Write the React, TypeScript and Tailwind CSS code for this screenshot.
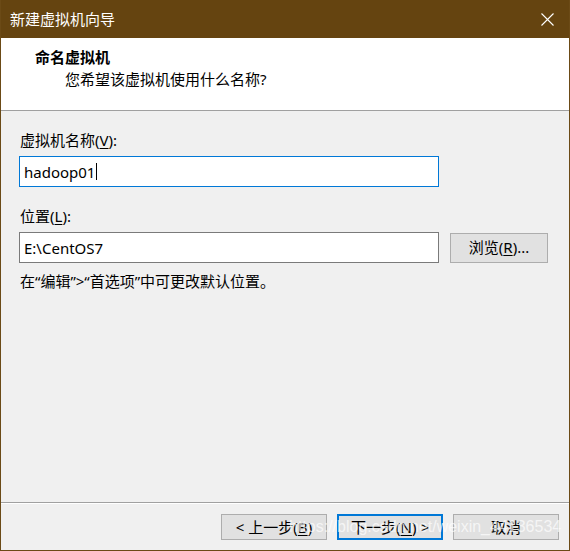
import React from "react";

const font = {
  fontFamily: '"Noto Sans", "Noto Sans CJK SC", sans-serif',
};

// underlined accelerator key, as in the Windows dialog
const Key: React.FC<{ k: string }> = ({ k }) => (
  <>
    (<span className="underline underline-offset-2">{k}</span>)
  </>
);

const Button: React.FC<{ primary?: boolean; children: React.ReactNode }> = ({
  primary,
  children,
}) => (
  <div
    className={`flex h-[26px] w-[106px] items-center justify-center bg-[#e1e1e1] text-[15px] leading-none text-black ${
      primary ? "border-2 border-[#0078d7]" : "border border-[#adadad]"
    }`}
  >
    {children}
  </div>
);

const App: React.FC = () => {
  return (
    <div
      className="relative flex h-[551px] w-[570px] flex-col overflow-hidden border-x border-b border-[#6b4a16] bg-[#f0f0f0] text-black"
      style={font}
    >
      {/* title bar */}
      <div className="flex h-[38px] shrink-0 items-center justify-between bg-[#654410] pl-[9px] pr-[15px]">
        <span className="text-[15px] leading-5 text-white">新建虚拟机向导</span>
        <svg width="13" height="13" viewBox="0 0 13 13" className="text-white">
          <path d="M0.5 0.5 L12.5 12.5 M12.5 0.5 L0.5 12.5" stroke="currentColor" strokeWidth="1.1" />
        </svg>
      </div>

      {/* header */}
      <div className="h-[73px] shrink-0 border-b border-[#a0a0a0] bg-white pl-[34px] pt-[9px]">
        <div className="text-[15px] font-bold leading-5">命名虚拟机</div>
        <div className="mt-[2px] pl-[30px] text-[15px] leading-5">您希望该虚拟机使用什么名称?</div>
      </div>

      {/* body */}
      <div className="flex-1 pl-[18px] pr-[20px] pt-[19px]">
        <div className="pl-[1px] text-[15px] leading-5">
          虚拟机名称<Key k="V" />:
        </div>
        <div className="mt-[6px] flex h-[31px] w-[420px] items-center border border-[#0078d7] bg-white pl-[4px] text-[15px] leading-5">
          hadoop01
          <span className="ml-[1px] inline-block h-[17px] w-px bg-black" />
        </div>

        <div className="mt-[19px] pl-[1px] text-[15px] leading-5">
          位置<Key k="L" />:
        </div>
        <div className="mt-[6px] flex items-center gap-[11px]">
          <div className="flex h-[31px] w-[420px] items-center border border-[#7a7a7a] bg-white pl-[4px] text-[15px] leading-5">
            E:\CentOS7
          </div>
          <div className="flex h-[30px] w-[98px] items-center justify-center border border-[#adadad] bg-[#e1e1e1] text-[15px] leading-none">
            浏览<Key k="R" />...
          </div>
        </div>

        <div className="mt-[8px] pl-[1px] text-[15px] leading-5">
          在“编辑”&gt;“首选项”中可更改默认位置。
        </div>
      </div>

      {/* footer */}
      <div className="shrink-0 border-t border-[#a0a0a0]">
        <div className="flex justify-end gap-[10px] border-t border-white pb-[10px] pr-[10px] pt-[10px]">
          <Button>
            &lt; 上一步<Key k="B" />
          </Button>
          <Button primary>
            下一步<Key k="N" /> &gt;
          </Button>
          <Button>取消</Button>
        </div>
      </div>

      {/* blog watermark over the buttons */}
      <div
        className="pointer-events-none absolute bottom-[13px] left-[288px] whitespace-nowrap text-[16px] leading-5 text-white/70"
        style={{ fontFamily: '"Liberation Sans", Arial, sans-serif' }}
      >
        https://blog.csdn.net/weixin_44136534
      </div>
    </div>
  );
};

export default App;
